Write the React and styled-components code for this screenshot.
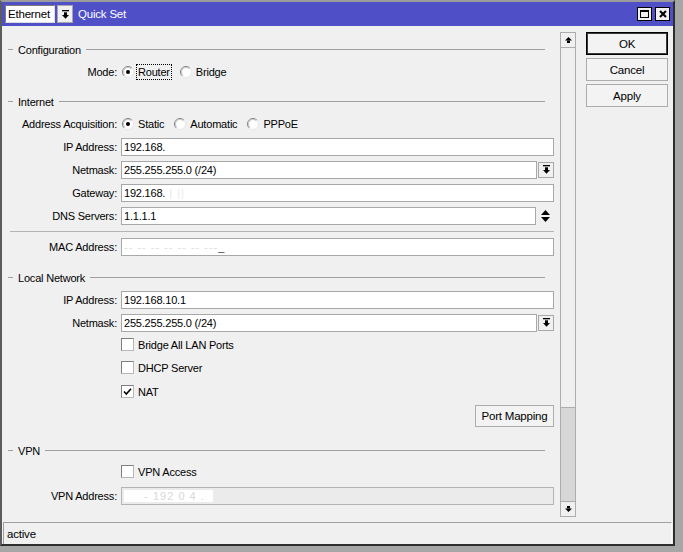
import React from 'react'
import styled, { createGlobalStyle } from 'styled-components'

const GlobalStyle = createGlobalStyle`
  html, body {
    margin: 0;
    padding: 0;
    background: #a6a6a6;
  }
  body {
    font-family: "Liberation Sans", Arial, sans-serif;
    font-size: 11px;
    letter-spacing: -0.2px;
    color: #000;
  }
`

const Window = styled.div`
  width: 675px;
  height: 546px;
  box-sizing: border-box;
  border-style: solid;
  border-width: 2px;
  border-color: #9c9c9c #2e2e2e #2e2e2e #5c5c5c;
  background: #f0f0f0;
  display: flex;
  flex-direction: column;
`

const TitleBar = styled.div`
  height: 24px;
  flex-shrink: 0;
  background: #4f4fc8;
  display: flex;
  align-items: center;
  padding: 0 2px 0 3px;
`

const SelectBox = styled.div`
  width: 50px;
  height: 18px;
  box-sizing: border-box;
  background: #fff;
  border: 1px solid;
  border-color: #7a7a7a #dcdcdc #dcdcdc #7a7a7a;
  padding-left: 2px;
  display: flex;
  align-items: center;
  font-size: 11.5px;
`

const SmallButton = styled.div`
  width: ${p => p.$w || 16}px;
  height: ${p => p.$h || 16}px;
  margin-left: ${p => p.$ml || 0}px;
  box-sizing: border-box;
  background: #f0f0f0;
  border: 1px solid ${p => (p.$dark ? '#000' : '#a8a8a8')};
  display: flex;
  align-items: center;
  justify-content: center;
  flex-shrink: 0;
`

const TitleText = styled.span`
  margin-left: 5px;
  color: #fff;
  font-size: 11.5px;
`

const WinButtons = styled.div`
  margin-left: auto;
  margin-right: 1px;
  display: flex;
  gap: 3px;
`

const Main = styled.div`
  flex: 1;
  display: flex;
  min-height: 0;
`

const FormPane = styled.div`
  width: 555px;
  box-sizing: border-box;
  padding: 13px 3px 0 6px;
  overflow: hidden;
  display: flex;
  flex-direction: column;
`

const GroupHeader = styled.div`
  height: 21px;
  margin-top: ${p => p.$mt || 0}px;
  display: flex;
  align-items: center;
  padding-right: 9px;
  flex-shrink: 0;

  &::before {
    content: '';
    width: 5px;
    height: 1px;
    background: #a0a0a0;
    margin-right: 5px;
  }
  &::after {
    content: '';
    flex: 1;
    height: 1px;
    background: #a0a0a0;
    margin-left: 5px;
  }
`

const Separator = styled.div`
  height: 1px;
  margin: 4px 0 3px 2px;
  background: #b4b4b4;
  flex-shrink: 0;
`

const Row = styled.div`
  height: ${p => p.$h || 23}px;
  margin-top: ${p => p.$mt || 0}px;
  display: grid;
  grid-template-columns: 109px 1fr;
  column-gap: 4px;
  align-items: center;
  flex-shrink: 0;
`

const Label = styled.span`
  text-align: right;
  white-space: nowrap;
`

const FieldLine = styled.div`
  display: flex;
  align-items: center;
  gap: 1px;
`

const Field = styled.div`
  flex: 1;
  height: 18px;
  box-sizing: border-box;
  border: 1px solid ${p => (p.$disabled ? '#b4b4b4' : '#a8a8a8')};
  background: ${p => (p.$disabled ? '#ebebeb' : '#fff')};
  padding: 0 2px;
  display: flex;
  align-items: center;
  white-space: nowrap;
  overflow: hidden;
`

const Faint = styled.span`
  color: ${p => p.$c || '#e4e4e4'};
  background: ${p => p.$bg || 'transparent'};
  letter-spacing: 1px;
`

const SpinIcon = styled.div`
  width: 17px;
  display: flex;
  justify-content: center;
`

const Options = styled.div`
  display: flex;
  align-items: center;
  gap: 9px;
  padding-left: 1px;
`

const Option = styled.label`
  display: inline-flex;
  align-items: center;
  gap: 3px;
  white-space: nowrap;
`

const OptionText = styled.span`
  padding: 1px 1px;
  outline: ${p => (p.$focus ? '1px dotted #000' : 'none')};
`

const Box = styled.span`
  width: 13px;
  height: 13px;
  box-sizing: border-box;
  background: #fff;
  border: 1px solid;
  border-color: #7e7e7e #b8b8b8 #b8b8b8 #7e7e7e;
  display: flex;
  align-items: center;
  justify-content: center;
`

const ButtonRow = styled.div`
  height: 22px;
  margin-top: 2px;
  display: flex;
  justify-content: flex-end;
  flex-shrink: 0;
`

const PushButton = styled.div`
  width: ${p => p.$w}px;
  height: ${p => p.$h || 23}px;
  box-sizing: border-box;
  background: #f3f3f3;
  border: 1px solid ${p => (p.$default ? '#000' : '#acacac')};
  box-shadow: ${p => (p.$default ? 'inset 0 0 0 1px #3a3a3a' : 'none')};
  display: flex;
  align-items: center;
  justify-content: center;
  font-size: 11.5px;
`

const ScrollBar = styled.div`
  width: 16px;
  height: 485px;
  margin: 6px 0 0 3px;
  display: flex;
  flex-direction: column;
  flex-shrink: 0;
`

const ScrollArrow = styled.div`
  height: 16px;
  box-sizing: border-box;
  border: 1px solid #adadad;
  background: #f0f0f0;
  display: flex;
  align-items: center;
  justify-content: center;
  flex-shrink: 0;
`

const Thumb = styled.div`
  height: 360px;
  box-sizing: border-box;
  border: 1px solid #adadad;
  border-top: none;
  background: #f0f0f0;
  flex-shrink: 0;
`

const Track = styled.div`
  flex: 1;
  background: #d7d7d7;
  border-left: 1px solid #adadad;
  border-right: 1px solid #adadad;
`

const ButtonColumn = styled.div`
  width: 82px;
  margin-left: 10px;
  padding-top: 6px;
  display: flex;
  flex-direction: column;
  gap: 3px;
`

const StatusBar = styled.div`
  height: 22px;
  flex-shrink: 0;
  margin: 0 1px;
  box-sizing: border-box;
  border-top: 1px solid #a0a0a0;
  border-left: 1px solid #a0a0a0;
  border-right: 1px solid #fafafa;
  padding-left: 3px;
  display: flex;
  align-items: center;
  font-size: 11.5px;
`

const DropIcon = () => (
  <svg width="7" height="9" viewBox="0 0 7 9">
    <rect x="0" y="0" width="7" height="1.3" fill="#000" />
    <rect x="2" y="2.3" width="3" height="2.7" fill="#000" />
    <polygon points="0,5 7,5 3.5,8.7" fill="#000" />
  </svg>
)

const ArrowIcon = ({ down }) => (
  <svg width="7" height="6" viewBox="0 0 7 6" style={down ? { transform: 'rotate(180deg)' } : undefined}>
    <polygon points="3.5,0 7,3.5 0,3.5" fill="#000" />
    <rect x="2" y="3.5" width="3" height="2.5" fill="#000" />
  </svg>
)

const UpDownIcon = () => (
  <svg width="9" height="12" viewBox="0 0 9 12">
    <polygon points="4.5,0 9,5 0,5" fill="#000" />
    <polygon points="0,7 9,7 4.5,12" fill="#000" />
  </svg>
)

const Radio = ({ checked, focus, children }) => (
  <Option>
    <svg width="12" height="12" viewBox="0 0 12 12">
      <circle cx="6" cy="6" r="5.5" fill="#fff" />
      <path d="M2.1 9.9 A5.5 5.5 0 0 1 9.9 2.1" fill="none" stroke="#808080" strokeWidth="1" />
      <path d="M2.8 9.2 A4.5 4.5 0 0 1 9.2 2.8" fill="none" stroke="#c4c4c4" strokeWidth="1" />
      <path d="M9.9 2.1 A5.5 5.5 0 0 1 2.1 9.9" fill="none" stroke="#e6e6e6" strokeWidth="1" />
      {checked && <circle cx="6" cy="6" r="2" fill="#000" />}
    </svg>
    <OptionText $focus={focus}>{children}</OptionText>
  </Option>
)

const Check = ({ checked, children }) => (
  <Option>
    <Box>
      {checked && (
        <svg width="9" height="9" viewBox="0 0 9 9">
          <path d="M1 4.5 L3.3 7 L8 1.8" fill="none" stroke="#000" strokeWidth="1.6" />
        </svg>
      )}
    </Box>
    <OptionText>{children}</OptionText>
  </Option>
)

const TextRow = ({ label, children, button, spin, disabled, mt }) => (
  <Row $mt={mt}>
    <Label>{label}</Label>
    <FieldLine>
      <Field $disabled={disabled}>{children}</Field>
      {button && (
        <SmallButton $w={16} $h={16}>
          <DropIcon />
        </SmallButton>
      )}
      {spin && (
        <SpinIcon>
          <UpDownIcon />
        </SpinIcon>
      )}
    </FieldLine>
  </Row>
)

const CheckRow = ({ checked, children }) => (
  <Row>
    <span />
    <div>
      <Check checked={checked}>{children}</Check>
    </div>
  </Row>
)

export default function App() {
  return (
    <>
      <GlobalStyle />
      <Window>
        <TitleBar>
          <SelectBox>Ethernet</SelectBox>
          <SmallButton $w={16} $h={18} $ml={2}>
            <DropIcon />
          </SmallButton>
          <TitleText>Quick Set</TitleText>
          <WinButtons>
            <SmallButton $w={15} $h={14} $dark>
              <svg width="9" height="8" viewBox="0 0 9 8">
                <rect x="0.5" y="0.5" width="8" height="7" fill="none" stroke="#000" />
                <rect x="0" y="0" width="9" height="2" fill="#000" />
              </svg>
            </SmallButton>
            <SmallButton $w={15} $h={14} $dark>
              <svg width="8" height="8" viewBox="0 0 8 8">
                <path d="M1 1 L7 7 M7 1 L1 7" stroke="#000" strokeWidth="2" />
              </svg>
            </SmallButton>
          </WinButtons>
        </TitleBar>

        <Main>
          <FormPane>
            <GroupHeader>Configuration</GroupHeader>
            <Row>
              <Label>Mode:</Label>
              <Options>
                <Radio checked focus>Router</Radio>
                <Radio>Bridge</Radio>
              </Options>
            </Row>

            <GroupHeader $mt={8}>Internet</GroupHeader>
            <Row>
              <Label>Address Acquisition:</Label>
              <Options>
                <Radio checked>Static</Radio>
                <Radio>Automatic</Radio>
                <Radio>PPPoE</Radio>
              </Options>
            </Row>
            <TextRow label="IP Address:">192.168.</TextRow>
            <TextRow label="Netmask:" button>255.255.255.0 (/24)</TextRow>
            <TextRow label="Gateway:">
              192.168.<Faint $c="#e8e8e8">&nbsp;| ||</Faint>
            </TextRow>
            <TextRow label="DNS Servers:" spin>1.1.1.1</TextRow>
            <Separator />
            <TextRow label="MAC Address:">
              <Faint $c="#dedede">-- -- -- -- -- -- ---</Faint>
              <Faint $c="#444">_</Faint>
            </TextRow>

            <GroupHeader $mt={9}>Local Network</GroupHeader>
            <TextRow label="IP Address:">192.168.10.1</TextRow>
            <TextRow label="Netmask:" button>255.255.255.0 (/24)</TextRow>
            <CheckRow>Bridge All LAN Ports</CheckRow>
            <CheckRow>DHCP Server</CheckRow>
            <CheckRow checked>NAT</CheckRow>
            <ButtonRow>
              <PushButton $w={79} $h={22}>Port Mapping</PushButton>
            </ButtonRow>

            <GroupHeader $mt={13}>VPN</GroupHeader>
            <CheckRow>VPN Access</CheckRow>
            <TextRow label="VPN Address:" disabled>
              <Faint $c="#d8d8d8" $bg="#fff">&nbsp;&nbsp;&nbsp;&nbsp;&nbsp;- 192 0 4 .&nbsp;&nbsp;</Faint>
            </TextRow>
          </FormPane>

          <ScrollBar>
            <ScrollArrow>
              <ArrowIcon />
            </ScrollArrow>
            <Thumb />
            <Track />
            <ScrollArrow>
              <ArrowIcon down />
            </ScrollArrow>
          </ScrollBar>

          <ButtonColumn>
            <PushButton $w={82} $default>OK</PushButton>
            <PushButton $w={82}>Cancel</PushButton>
            <PushButton $w={82}>Apply</PushButton>
          </ButtonColumn>
        </Main>

        <StatusBar>active</StatusBar>
      </Window>
    </>
  )
}
